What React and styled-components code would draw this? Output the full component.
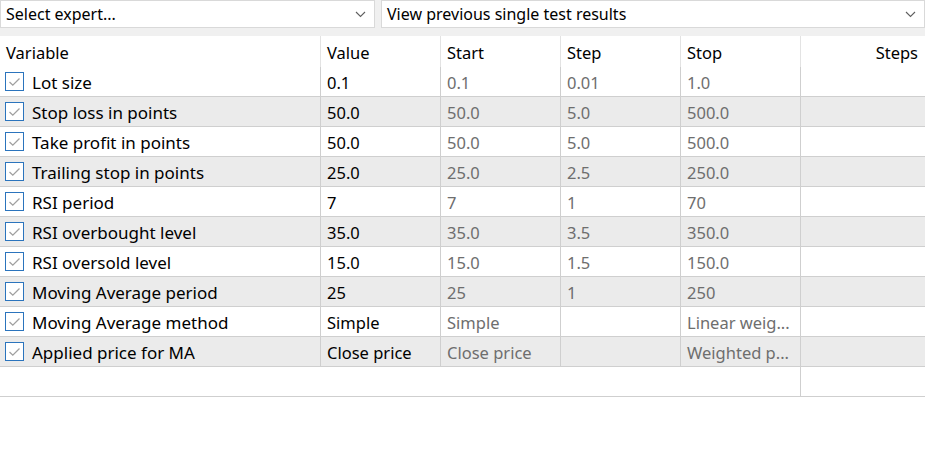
import styled, { createGlobalStyle } from 'styled-components'

const rows = [
  { name: 'Lot size', value: '0.1', start: '0.1', step: '0.01', stop: '1.0' },
  { name: 'Stop loss in points', value: '50.0', start: '50.0', step: '5.0', stop: '500.0' },
  { name: 'Take profit in points', value: '50.0', start: '50.0', step: '5.0', stop: '500.0' },
  { name: 'Trailing stop in points', value: '25.0', start: '25.0', step: '2.5', stop: '250.0' },
  { name: 'RSI period', value: '7', start: '7', step: '1', stop: '70' },
  { name: 'RSI overbought level', value: '35.0', start: '35.0', step: '3.5', stop: '350.0' },
  { name: 'RSI oversold level', value: '15.0', start: '15.0', step: '1.5', stop: '150.0' },
  { name: 'Moving Average period', value: '25', start: '25', step: '1', stop: '250' },
  { name: 'Moving Average method', value: 'Simple', start: 'Simple', step: '', stop: 'Linear weig...' },
  { name: 'Applied price for MA', value: 'Close price', start: 'Close price', step: '', stop: 'Weighted p...' },
]

function Chevron() {
  return (
    <svg width="11" height="7" viewBox="0 0 11 7">
      <polyline points="1,1 5.5,5.5 10,1" fill="none" stroke="#5f5f5f" strokeWidth="1.1" />
    </svg>
  )
}

function Check() {
  return (
    <CheckBox>
      <svg width="13" height="10" viewBox="0 0 13 10">
        <polyline points="1.5,5 4.8,8.2 11.5,1.5" fill="none" stroke="#a0a0a0" strokeWidth="1.3" />
      </svg>
    </CheckBox>
  )
}

function App() {
  return (
    <>
      <GlobalStyle />
      <Toolbar>
        <Combo width="375px">
          <span>Select expert...</span>
          <Chevron />
        </Combo>
        <Combo width="544px">
          <span>View previous single test results</span>
          <Chevron />
        </Combo>
      </Toolbar>
      <Table>
        <HeaderRow>
          <HeadCell>Variable</HeadCell>
          <HeadCell>Value</HeadCell>
          <HeadCell>Start</HeadCell>
          <HeadCell>Step</HeadCell>
          <HeadCell>Stop</HeadCell>
          <HeadCell align="right" last>Steps</HeadCell>
        </HeaderRow>
        {rows.map((r, i) => (
          <Row key={r.name} shaded={i % 2 === 1}>
            <NameCell>
              <Check />
              <span>{r.name}</span>
            </NameCell>
            <Cell>{r.value}</Cell>
            <Cell muted>{r.start}</Cell>
            <Cell muted>{r.step}</Cell>
            <Cell muted>{r.stop}</Cell>
            <Cell last />
          </Row>
        ))}
        <EmptyRow>
          <Cell />
          <Cell last />
        </EmptyRow>
      </Table>
    </>
  )
}

export default App

const GlobalStyle = createGlobalStyle`
  * {
    margin: 0;
    padding: 0;
    box-sizing: border-box;
  }
  body {
    background: #ffffff;
    font-family: "Noto Sans", "Open Sans", sans-serif;
    font-size: 16px;
    color: #000;
  }
`

const Toolbar = styled.div`
  display: flex;
  gap: 6px;
  height: 36px;
  background: #f0f0f0;
  align-items: flex-start;
`

const Combo = styled.div`
  width: ${props => props.width};
  height: 28px;
  display: flex;
  align-items: center;
  justify-content: space-between;
  padding: 0 8px 0 5px;
  background: #ffffff;
  border: 1px solid #d9d9d9;
  white-space: nowrap;

  span {
    line-height: 26px;
  }
`

const Table = styled.div`
  display: flex;
  flex-direction: column;
`

const cols = '321px 120px 120px 120px 120px 1fr'

const HeaderRow = styled.div`
  display: grid;
  grid-template-columns: ${cols};
  height: 31px;
  background: #ffffff;
  font-size: 16.5px;
`

const HeadCell = styled.div`
  display: flex;
  align-items: center;
  justify-content: ${props => (props.align === 'right' ? 'flex-end' : 'flex-start')};
  padding: 2px ${props => (props.align === 'right' ? '7px' : '6px')} 0 6px;
  border-right: ${props => (props.last ? 'none' : '1px solid #e3e3e3')};
  white-space: nowrap;
`

const Row = styled.div`
  display: grid;
  grid-template-columns: ${cols};
  height: 30px;
  background: ${props => (props.shaded ? '#ebebeb' : '#ffffff')};
  border-bottom: 1px solid #cfcfcf;
  font-size: 16.5px;
`

const EmptyRow = styled.div`
  display: grid;
  grid-template-columns: 801px 1fr;
  height: 30px;
  border-bottom: 1px solid #cfcfcf;
`

const Cell = styled.div`
  display: flex;
  align-items: center;
  padding: 2px 6px 0 6px;
  color: ${props => (props.muted ? '#6e6e6e' : '#000000')};
  border-right: ${props => (props.last ? 'none' : '1px solid #cfcfcf')};
  white-space: nowrap;
  overflow: hidden;
`

const NameCell = styled(Cell)`
  padding-left: 5px;
  gap: 8px;
  font-size: 17px;
`

const CheckBox = styled.div`
  width: 19px;
  height: 19px;
  flex: none;
  margin-top: -2px;
  border: 1.5px solid #2b74bd;
  background: #ffffff;
  display: flex;
  align-items: center;
  justify-content: center;
`
